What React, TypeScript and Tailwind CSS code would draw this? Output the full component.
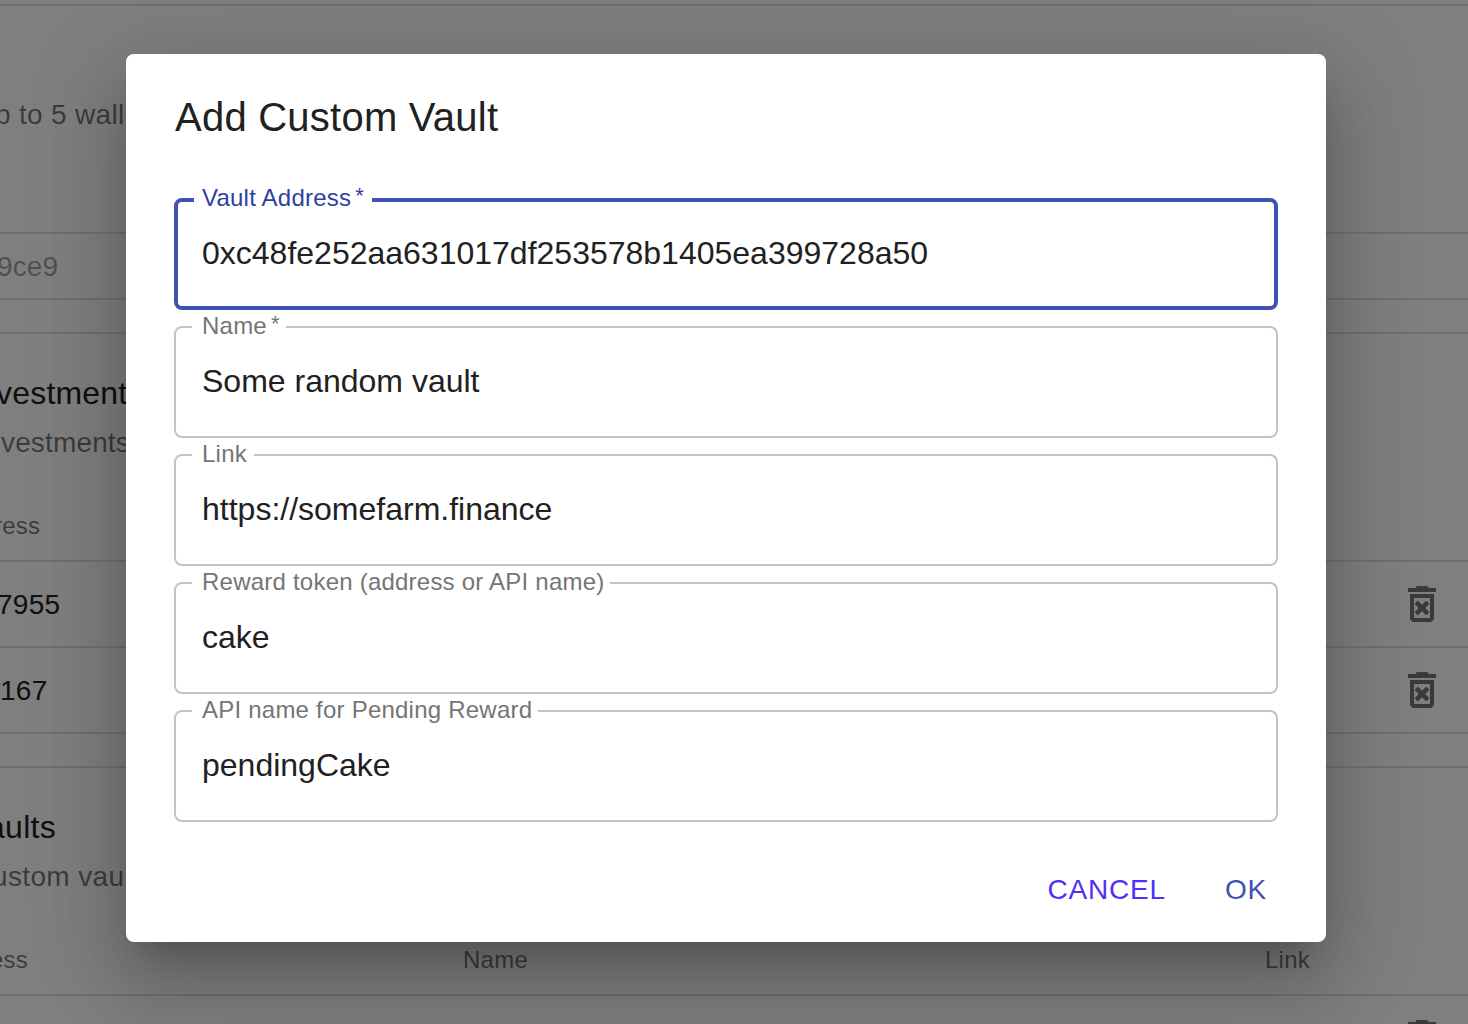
type FieldProps = {
  label: string;
  required?: boolean;
  value: string;
  notch: string;
  active?: boolean;
};

function Field({ label, required, value, notch, active }: FieldProps) {
  return (
    <fieldset
      className={`h-[122px] rounded-lg px-4 ${
        active ? "border-4 border-[#3f51b5]" : "border-2 border-[#c4c4c4]"
      }`}
    >
      <legend
        className={`${notch} flex items-center whitespace-nowrap text-2xl leading-none tracking-[0.225px] ${
          active ? "h-6 pb-1 pl-2 text-[#303f9f]" : "h-[22px] pb-0.5 pl-2.5 text-[#757575]"
        }`}
      >
        <span>{label}</span>
        {required && <span className="-mt-1 pl-1 text-[22px]">*</span>}
      </legend>
      <input
        className={`block w-full bg-transparent text-[32px] tracking-normal text-[#212121] outline-none ${
          active ? "h-[82px] pl-2" : "h-[86px] pl-2.5"
        }`}
        defaultValue={value}
      />
    </fieldset>
  );
}

function DeleteIcon() {
  return (
    <svg viewBox="0 0 24 24" className="size-12 fill-current text-[#757575]">
      <path
        d="M14.12 10.47L12 12.59l-2.13-2.12-1.41 1.41L10.59 14l-2.12 2.12 1.41 1.41L12 15.41l2.12 2.12 1.41-1.41L13.41 14l2.12-2.12z"
        stroke="currentColor"
        strokeWidth="0.4"
      />
      <path d="M15.5 4l-1-1h-5l-1 1H5v2h14V4zM6 19c0 1.1.9 2 2 2h8c1.1 0 2-.9 2-2V7H6v12zM8 9h8v10H8V9z" />
    </svg>
  );
}

function TableRow({ text, indent = "" }: { text?: string; indent?: string }) {
  return (
    <div className="flex h-[86px] shrink-0 items-center justify-between border-b-2 border-[#e0e0e0] pr-[22px] text-[28px] tracking-[0.28px] text-[#212121]">
      <span className={`pt-0.5 ${indent}`}>{text}</span>
      <DeleteIcon />
    </div>
  );
}

function Page() {
  return (
    <div className="flex h-full flex-col whitespace-nowrap bg-white">
      <div className="h-1.5 shrink-0 border-b-2 border-[#e0e0e0]" />
      <div className="h-[228px] shrink-0 border-b-2 border-[#e0e0e0] pt-[88px]">
        <p className="-ml-[5px] text-[28px] leading-[42px] tracking-[0.32px] text-black/54">p to 5 wallets</p>
      </div>
      <div className="flex h-[66px] shrink-0 items-center border-b-2 border-[#e0e0e0]">
        <p className="-ml-[3px] pt-0.5 text-[28px] tracking-[0.1px] text-black/38">9ce9</p>
      </div>
      <div className="h-[34px] shrink-0 border-b-2 border-[#e0e0e0]" />
      <div className="h-[228px] shrink-0 border-b-2 border-[#e0e0e0] pt-[34px]">
        <p className="-ml-[4px] text-[32px] leading-[51px] tracking-[0.2px] text-[#212121]">vestments</p>
        <p className="ml-[1px] pt-[3px] text-[28px] leading-[42px] tracking-[0.15px] text-black/54">vestments</p>
        <p className="-ml-[6px] pt-[38px] text-2xl leading-[48px] tracking-[0.24px] text-black/54">ress</p>
      </div>
      <TableRow text="7955" indent="-ml-[3px]" />
      <TableRow text="167" />
      <div className="h-[34px] shrink-0 border-b-2 border-[#e0e0e0]" />
      <div className="h-[228px] shrink-0 border-b-2 border-[#e0e0e0] pt-[34px]">
        <p className="-ml-[13px] text-[32px] leading-[51px] tracking-[0.3px] text-[#212121]">aults</p>
        <p className="-ml-[8px] pt-[3px] text-[28px] leading-[42px] tracking-[0.36px] text-black/54">ustom vaults</p>
        <div className="flex pt-[38px] text-2xl leading-[48px] tracking-[0.24px] text-black/54">
          <span className="-ml-[10px] w-[473px]">ess</span>
          <span className="w-[802px]">Name</span>
          <span>Link</span>
        </div>
      </div>
      <TableRow />
    </div>
  );
}

export default function App() {
  return (
    <div className="relative h-screen w-screen overflow-hidden font-['Liberation_Sans',Arial,sans-serif]">
      <Page />
      <div className="absolute inset-0 bg-black/50 pl-[126px] pt-[54px]">
        <div
          role="dialog"
          className="flex h-[888px] w-[1200px] flex-col rounded-lg bg-white px-12 pt-[31px] shadow-[0_22px_30px_-14px_rgba(0,0,0,0.2),0_48px_76px_6px_rgba(0,0,0,0.14),0_18px_92px_16px_rgba(0,0,0,0.12)]"
        >
          <h2 className="pl-px text-[40px] leading-[64px] tracking-[0.24px] text-[#212121]">Add Custom Vault</h2>
          <div className="mt-[39px] flex flex-col gap-1.5">
            <Field active required label="Vault Address" value="0xc48fe252aa631017df253578b1405ea399728a50" notch="w-[178px]" />
            <Field required label="Name" value="Some random vault" notch="w-[94px]" />
            <Field label="Link" value="https://somefarm.finance" notch="w-[62px]" />
            <Field label="Reward token (address or API name)" value="cake" notch="w-[418px]" />
            <Field label="API name for Pending Reward" value="pendingCake" notch="w-[346px]" />
          </div>
          <div className="mt-8 flex h-[72px] items-center justify-end gap-[59px] pr-[11px] text-[28px] tracking-[0.8px]">
            <button className="text-[#5130f5]">CANCEL</button>
            <button className="text-[#3f51b5]">OK</button>
          </div>
        </div>
      </div>
    </div>
  );
}
